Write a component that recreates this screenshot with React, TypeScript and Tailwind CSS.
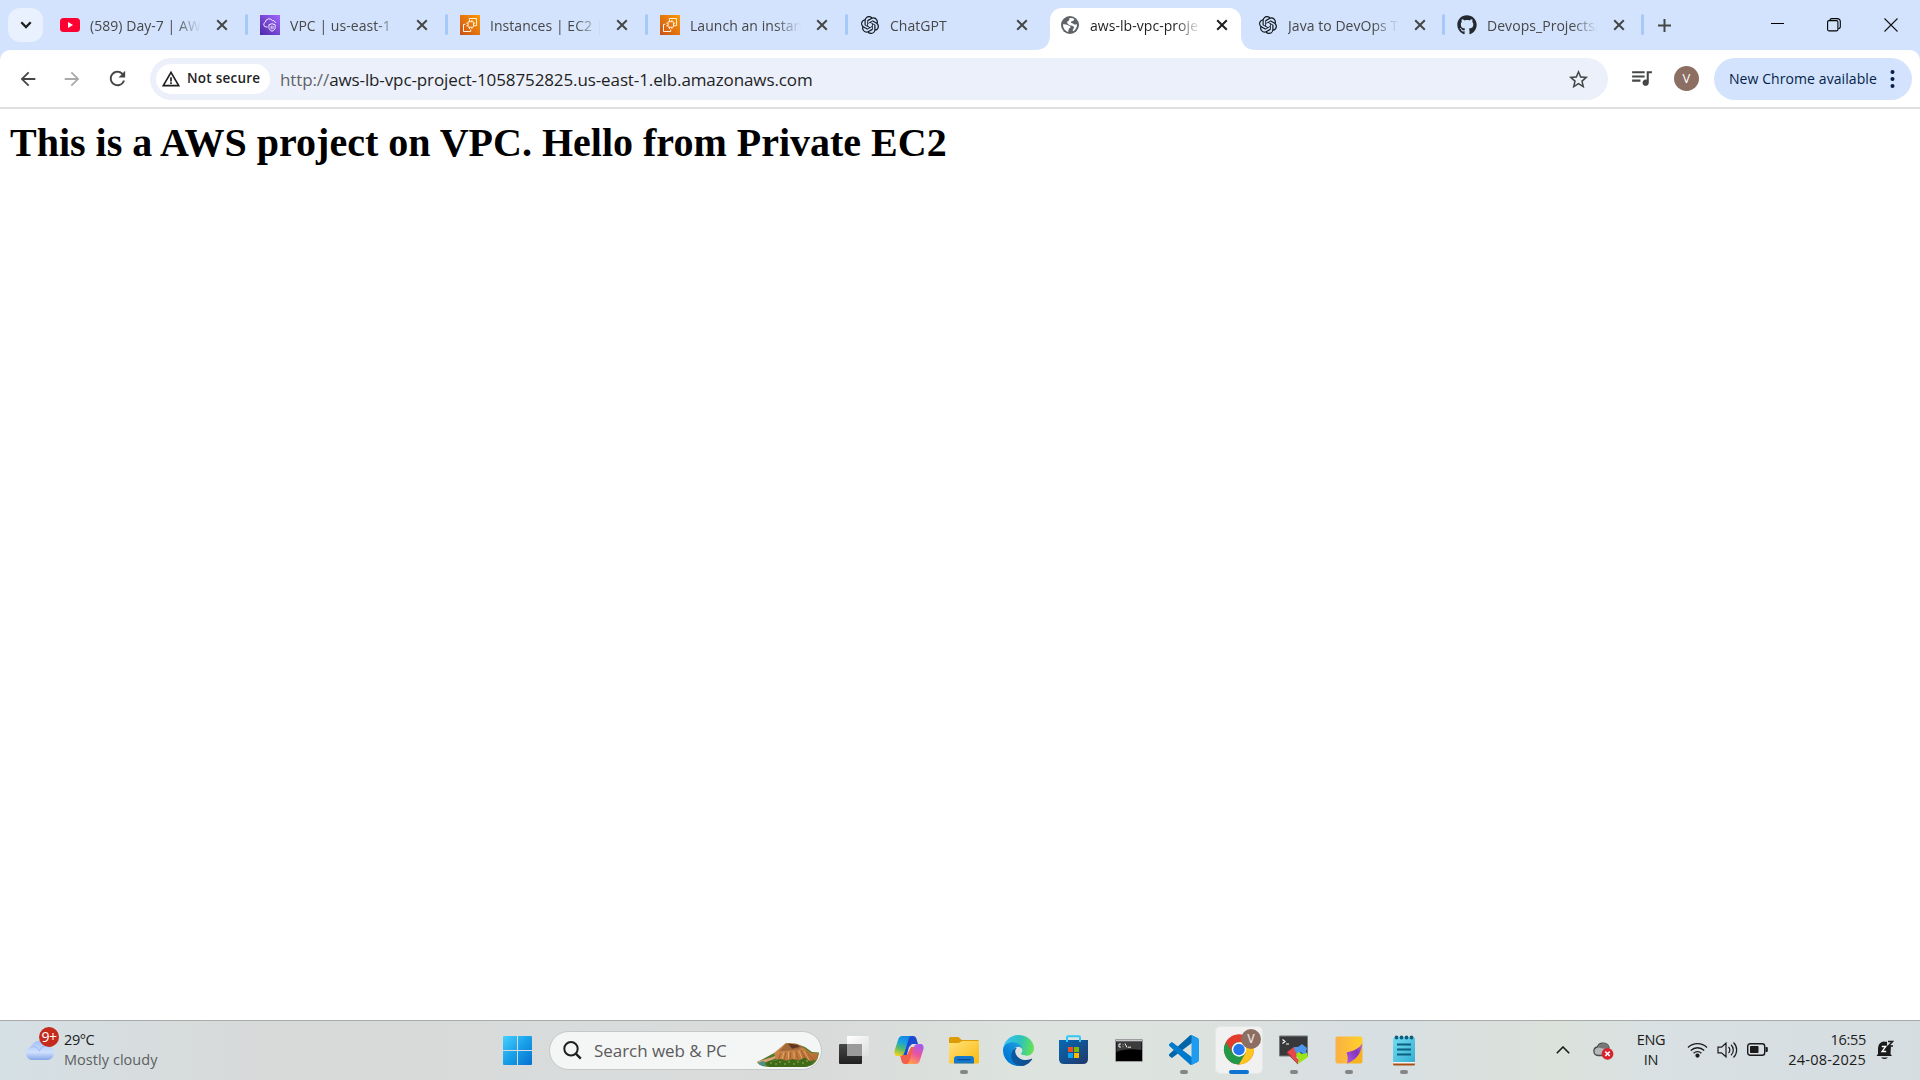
import React from 'react';
import { SiOpenai } from 'react-icons/si';
import { FaGithub } from 'react-icons/fa';
import { MdArrowBack, MdArrowForward, MdRefresh, MdStarBorder, MdQueueMusic, MdWarningAmber } from 'react-icons/md';

const Cross = ({ color }: { color: string }) => (
  <svg width="12" height="12" viewBox="0 0 12 12" fill="none" stroke={color} strokeWidth="2">
    <path d="M1.2 1.2 10.8 10.8M10.8 1.2 1.2 10.8" />
  </svg>
);

const Globe = () => (
  <svg width="18" height="18" viewBox="0 0 18 18">
    <circle cx="9" cy="9" r="9" fill="#5f6368" />
    <path
      d="M2 8.300C3.500 8 5.500 8.300 7 9.300c1.200.8 2.500.7 2.600 1.800.1 1-1.600 1-1.900 2-.2.900-.2 1.900-.6 2.800C4 15 2 12.200 2 8.300zM8.500 2c1.500-.3 3.500 0 4.800.9-.5.7-.2 1.400-1 1.800-.9.500-2 .3-2.300 1.100-.3.7.3 1.200 1.100 1.400 1.300.3 1.600 1.300 2.700 1.300.9 0 1.500-.4 2.200-.3.100 3-1.300 5.600-3.800 7-.9-.7-.5-1.600.2-2.300.8-.8.700-2-.2-2.600-1.200-.8-2.700-.5-4-1.300C6.800 8.200 5.700 7 6.300 5.800c.4-.8 1.600-.8 2-1.700.3-.7-.1-1.500.2-2.100z"
      fill="#fff"
    />
  </svg>
);

const YouTube = () => (
  <svg width="20" height="14" viewBox="0 0 20 14">
    <rect width="20" height="14" rx="3.5" fill="#ff0033" />
    <path d="M8 4v6l5-3z" fill="#fff" />
  </svg>
);

const VpcIcon = () => (
  <svg width="20" height="20" viewBox="0 0 20 20">
    <defs>
      <linearGradient id="vpc" x1="0" y1="1" x2="1" y2="0">
        <stop offset="0" stopColor="#4d27a8" />
        <stop offset="1" stopColor="#a166ff" />
      </linearGradient>
    </defs>
    <rect width="20" height="20" fill="url(#vpc)" />
    <g fill="none" stroke="#fff" strokeWidth=".9">
      <path d="M7.500 12H6a2.500 2.500 0 0 1-.7-4.800 3.900 3.900 0 0 1 7.200-1.500c1-.6 2 .1 2.100 1.200 1 .2 1.300.7 1.400 1.100" />
      <path d="M12 8.700 8.900 9.800v2.500c0 2 1.300 3.100 3.100 4 1.800-.9 3.200-2 3.200-4V9.800z" />
      <path d="M11.200 10.800v3.500M13 10.800v3.500" />
    </g>
  </svg>
);

const Ec2Icon = () => (
  <svg width="20" height="20" viewBox="0 0 20 20">
    <defs>
      <linearGradient id="ec2" x1="0" y1="1" x2="1" y2="0">
        <stop offset="0" stopColor="#c8511b" />
        <stop offset="1" stopColor="#ff9900" />
      </linearGradient>
    </defs>
    <rect width="20" height="20" fill="url(#ec2)" />
    <g fill="none" stroke="#fff3df" strokeWidth="1">
      <rect x="8" y="6.700" width="5.500" height="5.500" rx=".6" />
      <path d="M9.300 5V3.500h7.200v7.200H15M5.300 9.300H3.500v7.200h7.200V14.500M9.500 5v1.500M11.900 5v1.500M6.300 8.200h1.500M6.300 10.700h1.500M13.600 8.200h1.500M13.600 10.700h1.500M9.500 12.400v1.500M11.900 12.400v1.500" />
    </g>
  </svg>
);

const tabs: { title: string; icon: React.ReactNode; width: string; active?: boolean; sep?: boolean }[] = [
  { title: '(589) Day-7 | AWS', icon: <YouTube />, width: 'w-[200px]', sep: true },
  { title: 'VPC | us-east-1', icon: <VpcIcon />, width: 'w-[200px]', sep: true },
  { title: 'Instances | EC2 | u', icon: <Ec2Icon />, width: 'w-[200px]', sep: true },
  { title: 'Launch an instan', icon: <Ec2Icon />, width: 'w-[200px]', sep: true },
  { title: 'ChatGPT', icon: <SiOpenai size={18} color="#111820" />, width: 'w-[200px]' },
  { title: 'aws-lb-vpc-proje', icon: <Globe />, width: 'w-[198px]', active: true },
  { title: 'Java to DevOps T', icon: <SiOpenai size={18} color="#111820" />, width: 'w-[199px]', sep: true },
  { title: 'Devops_Projects/', icon: <FaGithub size={20} color="#24292f" />, width: 'w-[199px]', sep: true },
];

const Tab = ({ t }: { t: (typeof tabs)[number] }) => (
  <div className={`relative flex h-[50px] shrink-0 items-center pl-3 ${t.width}`}>
    {t.active && (
      <svg className="absolute -left-[13px] top-[8px]" width="222" height="42" viewBox="0 0 222 42">
        <path d="M0 42C10 42 15 36 15 27V12C15 5 20 0 27 0H194C201 0 206 5 206 12V27C206 36 211 42 221 42Z" fill="#fff" />
      </svg>
    )}
    <span className="relative flex h-5 w-5 shrink-0 items-center justify-center">{t.icon}</span>
    <span
      className={`relative ml-[10px] mt-[2px] w-[118px] shrink-0 whitespace-nowrap text-[14px] leading-5 tracking-[0.050px] [mask-image:linear-gradient(to_right,black_72%,transparent_94%)] ${t.active ? 'text-[#1f1f1f]' : 'text-[#474747]'}`}
    >
      {t.title}
    </span>
    <span className="relative ml-[8px]"><Cross color={t.active ? '#1f1f1f' : '#454746'} /></span>
    {t.sep && <span className="absolute right-0 top-[14px] h-[21px] w-[3px] rounded-full bg-[#a8c7fa]" />}
  </div>
);

const TabStrip = () => (
  <div className="flex h-[50px] bg-[#d3e3fd] pl-2">
    <div className="mt-2 flex h-[34px] w-[35px] items-center justify-center rounded-[12px] bg-[#e9f0fe]">
      <svg width="12" height="8" viewBox="0 0 12 8" fill="none" stroke="#1f1f1f" strokeWidth="2.300"><path d="M1.300 1.300 6 6l4.700-4.700" /></svg>
    </div>
    <div className="ml-[5px] flex">
      {tabs.map((t) => <Tab key={t.title} t={t} />)}
    </div>
    <svg className="ml-[14px] mt-[19px]" width="13" height="13" viewBox="0 0 13 13" stroke="#454746" strokeWidth="2"><path d="M6.500 0v13M0 6.500h13" /></svg>
    <svg className="ml-[100px] mt-[17px]" width="13" height="13" viewBox="0 0 13 13" stroke="#000"><path d="M0 6.500h13" /></svg>
    <svg className="ml-[43px] mt-[18px]" width="14" height="14" viewBox="0 0 14 14" fill="none" stroke="#000" strokeWidth="1.100">
      <rect x=".6" y="2.600" width="10.300" height="10.300" rx="1.500" />
      <path d="M3 2.500C3 1.200 3.800.6 5 .6h5c2 0 3.300 1.200 3.300 3.200v4.700c0 1.200-.7 2.200-2 2.200" />
    </svg>
    <svg className="ml-[43px] mt-[18px]" width="14" height="14" viewBox="0 0 14 14" stroke="#111" strokeWidth="1.100"><path d="m.5.5 13 13M13.500.5l-13 13" /></svg>
  </div>
);

const Toolbar = () => (
  <div className="bg-[#d3e3fd]">
    <div className="flex h-[59px] items-center rounded-t-[10px] border-b-2 border-[#e0e0e0] bg-white pl-[17px]">
      <MdArrowBack size={22} color="#454746" />
      <MdArrowForward className="ml-[22px]" size={22} color="#a9aaaa" />
      <MdRefresh className="ml-[23px]" size={23} color="#454746" />
      <div className="ml-[21px] flex h-[42px] w-[1458px] items-center rounded-full bg-[#ebf0fa] pl-[6px]">
        <div className="flex h-[30px] w-[114px] items-center rounded-full bg-white pl-[5px] text-[#1f1f1f]">
          <MdWarningAmber size={20} />
          <span className="ml-[6px] whitespace-nowrap text-[13.500px] font-semibold tracking-[0.250px]">Not secure</span>
        </div>
        <div className="ml-[10px] mt-[2px] whitespace-nowrap text-[17px] leading-6 tracking-[-0.110px] text-[#1f1f1f]"><span className="text-[#5f6368]">http://</span>aws-lb-vpc-project-1058752825.us-east-1.elb.amazonaws.com</div>
        <MdStarBorder className="ml-auto mr-[18px] mt-[1px]" size={23} color="#454746" />
      </div>
      <MdQueueMusic className="ml-[21px] -mt-[2px]" size={25} color="#454746" />
      <div className="ml-[20px] flex h-[25px] w-[25px] items-center justify-center rounded-full bg-[#8d6e63] text-[13px] text-white">V</div>
      <div className="ml-[15px] flex h-[42px] w-[198px] items-center rounded-full bg-[#d3e3fd] pl-[15px] text-[#041e49]">
        <span className="whitespace-nowrap text-[14px] tracking-[0.080px]">New Chrome available</span>
        <svg className="ml-auto mr-[17px]" width="5" height="18" viewBox="0 0 5 18" fill="currentColor"><circle cx="2.500" cy="2" r="2" /><circle cx="2.500" cy="9" r="2" /><circle cx="2.500" cy="16" r="2" /></svg>
      </div>
    </div>
  </div>
);

const Weather = () => (
  <svg width="36" height="38" viewBox="0 0 36 38">
    <defs>
      <linearGradient id="cloud" x1="0" y1="0" x2="0" y2="1"><stop offset="0" stopColor="#a3c0f8" /><stop offset=".6" stopColor="#cfe0fc" /><stop offset="1" stopColor="#86a6ea" /></linearGradient>
    </defs>
    <circle cx="23" cy="17.500" r="7" fill="#f08a1e" />
    <path d="M7.500 36a7 7 0 0 1-.5-13.500A9.800 9.800 0 0 1 24.500 22a7.200 7.200 0 0 1-.5 14z" fill="url(#cloud)" />
    <path d="M6.500 22.800c4-1 7 .5 9 4 2-4 5-5.500 9.500-5" fill="none" stroke="#9db9f2" strokeWidth="1.200" opacity=".8" />
  </svg>
);

const WindowsLogo = () => (
  <svg width="29" height="29" viewBox="0 0 29 29">
    <defs><linearGradient id="win" x1="0" y1="0" x2="29" y2="29" gradientUnits="userSpaceOnUse"><stop offset="0" stopColor="#45d0ff" /><stop offset=".5" stopColor="#189fe8" /><stop offset="1" stopColor="#0670d0" /></linearGradient></defs>
    <path fill="url(#win)" d="M1 0h13v14H0V1q0-1 1-1zM15 0h13q1 0 1 1v13H15zM0 15h14v14H1q-1 0-1-1zM15 15h14v13q0 1-1 1H15z" />
  </svg>
);

const Volcano = () => (
  <svg width="62" height="26" viewBox="0 0 62 26">
    <defs>
      <linearGradient id="rock" x1="0" y1="0" x2="1" y2="1"><stop offset="0" stopColor="#d49355" /><stop offset="1" stopColor="#b4692f" /></linearGradient>
    </defs>
    <path d="M4 18 19 10 29 1l11 1 8 3 7 5 7 .5C61 18 58 25 46 25H12C5 25 1 22 0 20z" fill="#54792a" />
    <path d="M17 11 29 1l10 .5 8 4.500 7 5h7l-1 7-8 1-6-2-8 2-7-1-7 1-5-2z" fill="url(#rock)" />
    <path d="M29 1.500 40 2.500 46 5l-6 3-8 .5-10 1z" fill="#a3683a" />
    <path d="m31 1.500 9 1.200 3 2-8 2z" fill="#5f3620" />
    <path d="m24 11-3 7M29 10l-2 8M34 10l-1 8M39 9l2 9M44 8l5 10M49 9l7 8" stroke="#9b5828" strokeWidth=".8" />
    <path d="m27 10-2 8M31.500 10v7M37 10v8M42 9l3 8M47 9l5 9" stroke="#e3a96d" strokeWidth=".9" />
    <path d="M0 20c6-3 12-3 18-6l1 2c-6 3-12 4-16 7z" fill="#dba27a" />
    <path d="M1 21c2-1 4-2 6-2l2 5c-4 0-7-1-8-3z" fill="#4b9188" />
    <path d="M9 22q3-4 6-3t6-1 6 0 6 0 6 0 6-1 6 1 7-2c-2 5-5 9-12 9H13z" fill="#3f6a1b" />
    <path d="M13 21h2m3 1h2m2-2h2m3 2h2m2-2h2m3 2h2m2-2h2m3 1h2m2-2h2" stroke="#7c9a2b" strokeWidth="1.300" />
  </svg>
);

const TaskView = () => (
  <svg width="30" height="30" viewBox="0 0 30 30">
    <defs>
      <linearGradient id="tvd" x1="0" y1="0" x2="0" y2="1"><stop offset="0" stopColor="#484848" /><stop offset="1" stopColor="#202020" /></linearGradient>
      <linearGradient id="tvw" x1="0" y1="0" x2="1" y2="1"><stop offset="0" stopColor="#fff" /><stop offset="1" stopColor="#dedede" /></linearGradient>
    </defs>
    <rect x="0" y="9" width="23" height="20" rx="1" fill="url(#tvd)" />
    <rect x="8" y="1" width="22" height="20" rx="1" fill="url(#tvw)" />
    <path d="M8 9h15v12H8z" fill="#9b9b9b" />
  </svg>
);

const Copilot = () => (
  <svg width="30" height="28" viewBox="0 0 30 28">
    <defs>
      <linearGradient id="cpa" x1=".6" y1="0" x2=".3" y2="1"><stop offset="0" stopColor="#1687e8" /><stop offset=".35" stopColor="#1aa5d8" /><stop offset=".65" stopColor="#59bb68" /><stop offset="1" stopColor="#f2d11e" /></linearGradient>
      <linearGradient id="cpb" x1=".7" y1="0" x2=".3" y2="1"><stop offset="0" stopColor="#a35cf0" /><stop offset=".5" stopColor="#ec549c" /><stop offset="1" stopColor="#ffa14f" /></linearGradient>
    </defs>
    <path d="M9 0h10c2 0 3 1 3.500 3L24 8h-6l-3 3-3 11H8z" fill="#1c49cf" />
    <path d="M21 28H11c-2 0-3-1-3.500-3L6 19h7l4-8h6z" fill="#f2604b" />
    <path d="M8 0h9c-2 1-2.500 3-3 5l-3 10c-1 3-2 5-5 5H4c-3 0-4-2-3.500-5L4 4C5 1 6 0 8 0z" fill="url(#cpa)" />
    <path d="M22 28h-9c2-1 2.500-3 3-5l3-10c1-3 2-5 5-5h2c3 0 4 2 3.500 5L26 24c-1 3-2 4-4 4z" fill="url(#cpb)" />
  </svg>
);

const Explorer = () => (
  <svg width="30" height="27" viewBox="0 0 30 27">
    <defs><linearGradient id="fold" x1="0" y1="0" x2="1" y2="1"><stop offset="0" stopColor="#ffe27a" /><stop offset="1" stopColor="#fbb90f" /></linearGradient></defs>
    <path d="M0 1.500Q0 0 1.500 0H9c1.500 0 2.500 3 4 3h16.500v6H0z" fill="#dd9c07" />
    <path d="M0 6h9c2 0 3-2 5-2h16v21q0 1.500-1.500 1.500h-27Q0 26.500 0 25z" fill="url(#fold)" />
    <path d="M5 26.500V22q0-3 3-3h14q3 0 3 3v4.500z" fill="#1479cd" />
    <path d="M8.500 22.700h13" stroke="#0a4a8f" strokeWidth="1.200" />
  </svg>
);

const Edge = () => (
  <svg width="31" height="31" viewBox="0 0 256 256">
    <defs>
      <linearGradient id="eda" x1="63" y1="177" x2="241" y2="177" gradientUnits="userSpaceOnUse"><stop stopColor="#0c59a4" /><stop offset="1" stopColor="#114a8b" /></linearGradient>
      <linearGradient id="edb" x1="157" y1="99" x2="46" y2="221" gradientUnits="userSpaceOnUse"><stop stopColor="#1b9de2" /><stop offset=".2" stopColor="#1595df" /><stop offset=".7" stopColor="#0680d7" /><stop offset="1" stopColor="#0078d4" /></linearGradient>
      <linearGradient id="edc" x1="20" y1="60" x2="250" y2="110" gradientUnits="userSpaceOnUse"><stop stopColor="#35c1f1" /><stop offset=".5" stopColor="#2cc2bd" /><stop offset="1" stopColor="#66e352" /></linearGradient>
    </defs>
    <path fill="url(#eda)" d="M235.700 195.500a93.700 93.700 0 0 1-10.600 4.700 101.900 101.900 0 0 1-35.900 6.400c-47.300 0-88.500-32.500-88.500-74.300a31.500 31.500 0 0 1 16.400-27.300c-42.800 1.800-53.800 46.400-53.800 72.500 0 74 68.100 81.400 82.800 81.400 7.900 0 19.800-2.300 27-4.600l1.300-.4a128.300 128.300 0 0 0 66.600-52.800 4 4 0 0 0-5.300-5.600z" />
    <path fill="url(#edb)" d="M105.700 241.400a79.200 79.200 0 0 1-22.700-21.300 80.700 80.700 0 0 1 29.500-120c3.200-1.500 8.500-4.100 15.600-4a32.400 32.400 0 0 1 25.700 13 31.900 31.900 0 0 1 6.300 18.700c0-.2 24.500-79.600-80-79.600-43.900 0-80 41.600-80 78.200a130.200 130.200 0 0 0 12.100 56 128 128 0 0 0 156.400 67 75.500 75.500 0 0 1-62.800-8z" />
    <path fill="url(#edc)" d="M152.300 148.900c-.9 1-3.400 2.500-3.400 5.600 0 2.600 1.700 5.200 4.800 7.300 14.300 10 41.400 8.600 41.500 8.600a59.600 59.600 0 0 0 30.300-8.300 61.400 61.400 0 0 0 30.400-52.900c.3-22.400-8-37.300-11.300-43.900C223.500 23.900 177.700 0 128 0A128 128 0 0 0 0 126.200c.5-36.500 36.800-66 80-66 3.500 0 23.500.3 42 10 16.300 8.600 24.900 19 30.800 29.300 6.200 10.700 7.300 24.100 7.300 29.500s-2.700 13.300-7.800 19.900z" />
  </svg>
);

const Store = () => (
  <svg width="29" height="30" viewBox="0 0 29 30">
    <defs><linearGradient id="store" x1="0" y1="0" x2="1" y2="1"><stop offset="0" stopColor="#0669b5" /><stop offset="1" stopColor="#21386a" /></linearGradient></defs>
    <path d="M0 5h29v19q0 5-5 5H5q-5 0-5-5z" fill="url(#store)" />
    <path d="M8 7V2.500Q8 1.200 9.300 1.200h10.400Q21 1.200 21 2.500V7" fill="none" stroke="#32c7f4" strokeWidth="2" />
    <path d="M9 12h5v5H9z" fill="#f25022" /><path d="M15 12h5v5h-5z" fill="#7fba00" /><path d="M9 18h5v5H9z" fill="#00a4ef" /><path d="M15 18h5v5h-5z" fill="#ffb900" />
  </svg>
);

const Cmd = () => (
  <svg width="28" height="23" viewBox="0 0 28 23">
    <rect x=".5" y=".5" width="27" height="22" rx="1" fill="#000" stroke="#9c9ca0" />
    <path d="M1 1h26v1.500H1z" fill="#c7c8cc" />
    <path d="M1.500 3h25v8C16 9.500 8 10 1.500 13z" fill="#3c3c3c" />
    <path d="M6 5H4v3h2M8 5.500v.6M8 7.500v.6M10 4.500l2 4M13 8.200h3" fill="none" stroke="#fff" strokeWidth=".9" />
  </svg>
);

const VsCode = () => (
  <svg width="30" height="30" viewBox="0 0 100 100">
    <path fill="#0065a9" d="M96.500 10.800 75.900.9c-2.400-1.200-5.200-.7-7.100 1.200L1.300 63.600c-1.800 1.700-1.800 4.500 0 6.100l5.500 5c1.500 1.400 3.700 1.500 5.300.3L93.400 13.400c2.700-2.100 6.600-.1 6.600 3.300v-.3c0-2.400-1.400-4.500-3.500-5.600z" />
    <path fill="#007acc" d="m96.500 89.200-20.600 9.900c-2.400 1.200-5.200.7-7.100-1.200L1.300 36.400c-1.800-1.700-1.800-4.500 0-6.100l5.500-5c1.500-1.400 3.700-1.500 5.300-.3l81.300 61.600c2.700 2.100 6.600.1 6.600-3.300v.3c0 2.400-1.400 4.500-3.500 5.600z" />
    <path fill="#1f9cf0" d="M75.900 99.100c-2.400 1.200-5.200.7-7.100-1.200 2.300 2.300 6.200.7 6.200-2.600V4.700c0-3.300-3.900-4.900-6.200-2.600 1.900-1.900 4.700-2.400 7.100-1.200l20.600 9.900c2.200 1 3.500 3.200 3.500 5.600v67.200c0 2.400-1.400 4.500-3.500 5.600z" />
  </svg>
);

const Chrome = () => (
  <svg width="48" height="48" viewBox="0 0 48 48">
    <g transform="translate(24 24.500)">
      <circle r="15" fill="#e33b2e" />
      <path d="M-13 -7.500A15 15 0 0 0 0 15L6.500 3.750 0 0 -6.500 3.750z" fill="#229a4a" />
      <path d="M0 15A15 15 0 0 0 13 -7.500H0L6.500 3.750z" fill="#fcc521" />
      <path d="M-13-7.500-6.500 3.750 0-7.500z" fill="#229a4a" />
      <path d="M-13-7.500A15 15 0 0 1 13-7.500H0A7.500 7.500 0 0 0-6.500 3.750z" fill="#e33b2e" />
      <circle r="7.200" fill="#fff" /><circle r="5.700" fill="#2277ec" />
    </g>
  </svg>
);

const Moba = () => (
  <svg width="30" height="30" viewBox="0 0 30 30">
    <path d="M.5 1h28v20H.5z" fill="#363839" stroke="#77797a" />
    <path d="m3.500 4.500 2.500 2-2.500 2M7 9h3" fill="none" stroke="#fff" strokeWidth="1.200" />
    <path d="m8 17 7-5 3 2-1 3 2 1-2 4 3 3-1 3z" fill="#e94747" />
    <path d="m8 17 11 11v1.500L7.500 18z" fill="#a92f2f" />
    <path d="m15 12 4 0 4-3 5 4-1 4 2 2-4 1-3-3-4 2-2-3z" fill="#4c96ee" />
    <path d="m18 22-1-3 3-2 3 2 5-1 1 4-10 7 1-4z" fill="#9be317" />
  </svg>
);

const Sticky = () => (
  <svg width="28" height="28" viewBox="0 0 28 28">
    <defs>
      <linearGradient id="st" x1="0" y1="0" x2="1" y2="0"><stop offset="0" stopColor="#fbb044" /><stop offset="1" stopColor="#ffd02b" /></linearGradient>
      <linearGradient id="stp" x1="0" y1="1" x2="1" y2="0"><stop offset="0" stopColor="#b05be8" /><stop offset=".6" stopColor="#8532bd" /><stop offset="1" stopColor="#b876e5" /></linearGradient>
    </defs>
    <path d="M2.500.5h23q2 0 2 2V8L13 27.500H2.500q-2 0-2-2v-23q0-2 2-2z" fill="url(#st)" />
    <path d="M27.500 8v17.500q0 2-2 2H12z" fill="#f6b321" />
    <path d="M27.500 7c-3 5-8 8-16 9.500q2 5 .5 11C21 24 26 18 27.500 7z" fill="url(#stp)" />
  </svg>
);

const Notepad = () => (
  <svg width="22" height="31" viewBox="0 0 22 31">
    <defs><linearGradient id="np" x1="0" y1="0" x2="1" y2="1"><stop offset="0" stopColor="#74dcf0" /><stop offset="1" stopColor="#35afd3" /></linearGradient></defs>
    <path d="M0 26h22v3q0 1.500-1.500 1.500h-19Q0 30.500 0 29z" fill="#a84e10" />
    <path d="M0 26h22v2.500H0z" fill="#f4f4f4" />
    <path d="M0 4q0-1.500 1.500-1.500h19Q22 2.500 22 4v23H0z" fill="url(#np)" />
    <path d="M4 9.500h14M4 14.500h14M4 19.500h14" stroke="#0b607f" strokeWidth="1.800" />
    <g fill="#0b607f"><circle cx="3.500" cy="2.500" r="1.900" /><circle cx="8.500" cy="2.500" r="1.900" /><circle cx="13.500" cy="2.500" r="1.900" /><circle cx="18.500" cy="2.500" r="1.900" /></g>
  </svg>
);

const apps: { id: string; icon: React.ReactNode; state?: 'running' | 'active' }[] = [
  { id: 'taskview', icon: <TaskView /> },
  { id: 'copilot', icon: <Copilot /> },
  { id: 'explorer', icon: <Explorer />, state: 'running' },
  { id: 'edge', icon: <Edge /> },
  { id: 'store', icon: <Store /> },
  { id: 'cmd', icon: <Cmd /> },
  { id: 'vscode', icon: <VsCode />, state: 'running' },
  { id: 'chrome', icon: <Chrome />, state: 'active' },
  { id: 'moba', icon: <Moba />, state: 'running' },
  { id: 'sticky', icon: <Sticky />, state: 'running' },
  { id: 'notepad', icon: <Notepad />, state: 'running' },
];

const Tray = () => (
  <div className="ml-auto flex h-full items-center pb-[2px] text-[#1b1b1b]">
    <svg width="14" height="8" viewBox="0 0 14 8" fill="none" stroke="#1b1b1b" strokeWidth="1.600"><path d="M.8 7.200 7 1l6.200 6.200" /></svg>
    <svg className="ml-[23px] mt-[3px]" width="21" height="18" viewBox="0 0 21 18">
      <path d="M5 13.500A4.300 4.300 0 0 1 4.300 5C5.500 1.800 8.500.8 11 1.200c2.500.3 4.200 1.800 5 4.300l-4 8z" fill="#b5b7b8" stroke="#4a4b4b" strokeWidth="1.300" />
      <path d="M5 5.500c1-3 3-4.200 6-4.200 2.500 0 4.500 1.500 5 4.200l-3.500 1.500z" fill="#777" />
      <circle cx="14.500" cy="11.800" r="5.900" fill="#d9242f" /><path d="m12.300 9.600 4.400 4.400m0-4.400-4.400 4.400" stroke="#fff" strokeWidth="1.500" />
    </svg>
    <div className="ml-[22px] w-[30px] text-center text-[14.500px] leading-5 tracking-[-0.300px]">ENG<br />IN</div>
    <svg className="ml-[21px]" width="21" height="16" viewBox="0 0 21 16" fill="none" stroke="#1b1b1b" strokeWidth="1.300">
      <path d="M1 5.500a13.500 13.500 0 0 1 19 0M3.800 8.500a9.500 9.500 0 0 1 13.400 0M6.600 11.300a5.600 5.600 0 0 1 7.800 0" /><circle cx="10.500" cy="13.600" r="1.500" fill="#1b1b1b" />
    </svg>
    <svg className="ml-[9px]" width="21" height="18" viewBox="0 0 21 18" fill="none" stroke="#1b1b1b" strokeWidth="1.200">
      <path d="M1 6.200h3.500L9 2.200v13.600l-4.500-4H1zM11.500 6a4 4 0 0 1 0 6M14 3.800a7 7 0 0 1 0 10.400M16.500 1.500a10.500 10.500 0 0 1 0 15" />
    </svg>
    <svg className="ml-[9px]" width="21" height="13" viewBox="0 0 21 13">
      <rect x=".7" y=".7" width="17" height="11.600" rx="2.500" fill="none" stroke="#1b1b1b" strokeWidth="1.400" /><rect x="3" y="3" width="8.500" height="7" rx=".7" fill="#1b1b1b" /><path d="M18.500 4h1.300q1 0 1 1v3q0 1-1 1h-1.300z" fill="#1b1b1b" />
    </svg>
    <div className="ml-[18px] w-[80px] whitespace-nowrap text-right text-[14.500px] leading-5"><div className="tracking-[-0.300px]">16:55</div><div className="-ml-1 tracking-[0.200px]">24-08-2025</div></div>
    <svg className="ml-[10px] mr-[26px]" width="18" height="20" viewBox="0 0 18 20">
      <path d="M2 14V8a6 6 0 0 1 7-6.300h2v4h4l-.5 8.300 1.500 2H.5z" fill="#1b1b1b" /><path d="M5 17.500h7q-3.500 3-7 0z" fill="#1b1b1b" />
      <path d="M5.800 6.500h4L6 11.500h4.200" fill="none" stroke="#fff" strokeWidth="1.300" /><path d="M12 1.500h4.500L12.500 6H17" fill="none" stroke="#1b1b1b" strokeWidth="1.500" />
    </svg>
  </div>
);

const Taskbar = () => (
  <footer className="flex h-[60px] items-center border-t border-[#a9aaaa] bg-[linear-gradient(90deg,#d5e0e5_0px,#d7dcdd_170px,#d8d9d9_280px,#d9dcdc_600px,#d9dbda_820px,#dde4df_1050px,#dce2dd_1200px,#d8dfe3_1360px,#d9e0dd_1480px,#dbe2dc_1560px,#d8e0e4_1680px,#d6dde1_1920px)]">
    <div className="flex h-full w-[503px] items-center pl-[24px]">
      <div className="relative mt-[-16px] h-[38px] w-[36px]">
        <Weather />
        <div className="absolute left-[15px] top-[3px] flex h-5 w-5 items-center justify-center rounded-full bg-[#c42b1c] text-[14px] tracking-[-0.500px] text-white">9+</div>
      </div>
      <div className="-mt-[2px] ml-[4px] whitespace-nowrap text-[14.500px] leading-5 text-[#1b1b1b]"><div className="tracking-[-0.400px]">29°C</div><div className="tracking-[0.050px] text-[#5c5f60]">Mostly cloudy</div></div>
    </div>
    <WindowsLogo />
    <div className="ml-[17px] flex h-[39px] w-[273px] items-center rounded-full border border-[#c6c8c8] bg-[#f4f5f5] pl-[13px]">
      <svg width="19" height="19" viewBox="0 0 19 19" fill="none" stroke="#1f1f1f" strokeWidth="2"><circle cx="8" cy="7.800" r="6.700" /><path d="m12.800 12.700 5 5" strokeWidth="2.400" /></svg>
      <span className="ml-[12px] mt-[1px] whitespace-nowrap text-[17px] tracking-[-0.050px] text-[#5b5b5b]">Search web &amp; PC</span>
      <div className="ml-auto mr-[2px] mt-[8px]"><Volcano /></div>
    </div>
    <div className="ml-[4px] flex h-full">
      {apps.map((a) => (
        <div key={a.id} className="relative flex h-full w-[55px] items-center justify-center pb-[1px]">
          {a.state === 'active' && <div className="absolute left-[4px] top-[5px] h-[48px] w-[48px] rounded-[5px] border border-[#e5e7e6] bg-[#f0f1f0]" />}
          <div className={a.state === 'active' ? 'absolute left-[4px] top-[4px]' : 'relative'}>{a.icon}</div>
          {a.state === 'active' && <div className="absolute left-[30px] top-[8px] flex h-5 w-5 items-center justify-center rounded-full bg-[#8d6e63] text-[12px] font-semibold text-[#e4dbd8]">V</div>}
          {a.state === 'active' && <div className="absolute left-[18px] top-[49px] h-[4px] w-[20px] rounded-full bg-[#0d74d1]" />}
          {a.state === 'running' && <div className="absolute left-[24px] top-[49px] h-[4px] w-[8px] rounded-full bg-[#848584]" />}
        </div>
      ))}
    </div>
    <Tray />
  </footer>
);

export default function App() {
  return (
    <div className="flex h-[1080px] w-[1920px] flex-col overflow-hidden bg-white font-['Open_Sans',sans-serif]">
      <TabStrip />
      <Toolbar />
      <main className="flex-1 px-[10px] pt-[11px]">
        <h1 className="whitespace-nowrap font-['Liberation_Serif',serif] text-[40px] font-bold leading-[46px] text-black">This is a AWS project on VPC. Hello from Private EC2</h1>
      </main>
      <Taskbar />
    </div>
  );
}
